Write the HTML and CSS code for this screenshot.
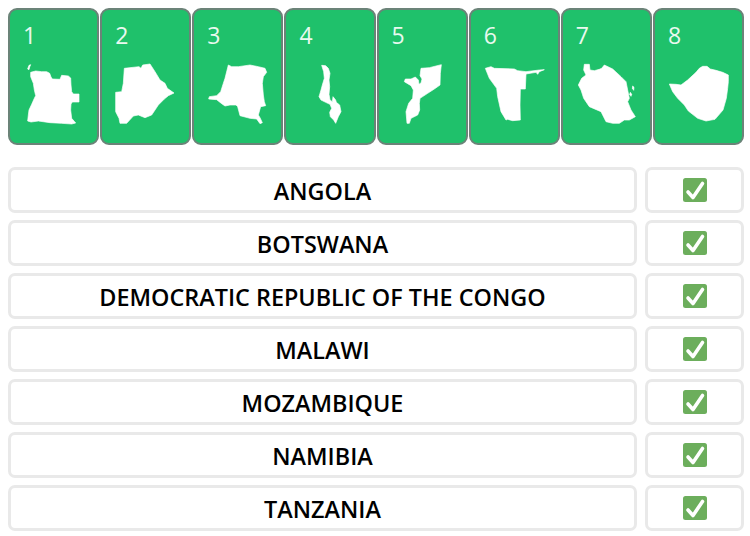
FILE: index.html
```html
<!doctype html>
<html lang="en">
<head>
  <meta charset="utf-8">
  <title>Countries quiz</title>
  <link rel="stylesheet" href="styles.css">
</head>

<body>

<div id="maps">
  <div class="map">
    <div class="num">1</div>
    <svg viewBox="-15 0 261 225"><path d="M38 42 L42 31 L47 29 L44 36 L42 44 Z"/><path d="M47 52 L62 48 L80 50 L95 50 L104 55 L108 66 L112 72 L135 73 L140 61 L160 63 L167 69 L168 90 L170 110 L175 117 L192 117 L192 141 L172 141 L168 147 L167 165 L170 190 L182 204 L170 207 L140 205 L105 203 L70 198 L48 201 L38 198 L40 180 L42 165 L50 148 L58 130 L62 122 L58 105 L55 85 L47 65 Z"/></svg>
  </div>
  <div class="map">
    <div class="num">2</div>
    <svg viewBox="-9 0 261 225"><path d="M58 40 L102 35 L108 40 L113 30 L135 27 L150 50 L165 75 L180 85 L187 100 L207 114 L190 122 L178 132 L160 150 L150 165 L140 180 L120 188 L100 180 L85 183 L65 205 L45 205 L42 190 L32 170 L32 112 L50 110 L55 85 Z"/></svg>
  </div>
  <div class="map">
    <div class="num">3</div>
    <svg viewBox="-18 0 261 225"><path d="M85 30 L95 35 L115 35 L150 30 L175 35 L195 40 L200 52 L190 65 L187 85 L190 120 L193 140 L197 152 L182 155 L175 180 L180 188 L187 203 L180 206 L170 192 L150 190 L120 182 L113 155 L108 150 L90 150 L75 153 L65 146 L50 134 L26 132 L28 125 L50 122 L62 110 L70 85 L75 70 Z"/></svg>
  </div>
  <div class="map">
    <div class="num">4</div>
    <svg viewBox="-27 0 261 225"><path d="M80 31 L92 32 L100 40 L105 55 L102 75 L104 95 L102 118 L105 135 L112 140 L114 125 L122 135 L124 142 L134 150 L138 170 L130 185 L122 205 L116 195 L106 185 L104 172 L110 160 L105 148 L92 142 L78 135 L72 125 L78 105 L82 90 L88 70 L86 50 Z"/></svg>
  </div>
  <div class="map">
    <div class="num">5</div>
    <svg viewBox="249 0 261 225"><path d="M375 40 L400 38 L420 33 L436 29 L433 55 L432 90 L415 102 L395 115 L372 130 L370 145 L371 165 L365 180 L345 190 L340 205 L333 205 L330 170 L338 145 L350 130 L352 105 L345 92 L325 80 L328 72 L345 72 L358 66 L367 75 L369 88 L375 84 L378 72 L372 62 Z"/></svg>
  </div>
  <div class="map">
    <div class="num">6</div>
    <svg viewBox="-15 0 261 225"><path d="M28 40 L45 35 L55 40 L115 42 L125 47 L150 50 L190 45 L205 44 L190 50 L185 58 L180 52 L150 57 L148 102 L133 102 L132 150 L133 195 L110 197 L95 193 L90 195 L75 170 L65 125 L62 100 L40 70 Z"/></svg>
  </div>
  <div class="map">
    <div class="num">7</div>
    <svg viewBox="-24 0 261 225"><path d="M40 28 L55 28 L57 45 L70 47 L85 43 L92 40 L100 30 L125 42 L150 65 L165 80 L170 105 L175 130 L170 140 L180 165 L193 185 L175 195 L160 195 L145 205 L125 205 L105 200 L90 170 L55 155 L38 130 L30 105 L22 90 L32 70 L45 60 L38 45 Z"/><path d="M185 93 L189 97 L188 106 L184 100 Z"/><path d="M178 112 L182 118 L180 124 L176 118 Z"/></svg>
  </div>
  <div class="map">
    <div class="num">8</div>
    <svg viewBox="252 0 261 225"><path d="M295 87 L315 88 L330 90 L350 75 L375 52 L385 40 L395 34 L408 34 L418 42 L435 46 L455 52 L472 60 L472 80 L470 100 L466 130 L456 165 L432 193 L405 198 L380 190 L352 168 L340 150 L320 130 L305 110 Z"/></svg>
  </div>
</div>

<div id="answers">
  <div class="name">ANGOLA</div>
  <div class="mark"><svg class="tick" viewBox="0 0 24 24"><rect width="24" height="24" rx="2.5"/><path d="M5 14 L10 19.5 L19.5 5.5"/></svg></div>
  <div class="name">BOTSWANA</div>
  <div class="mark"><svg class="tick" viewBox="0 0 24 24"><rect width="24" height="24" rx="2.5"/><path d="M5 14 L10 19.5 L19.5 5.5"/></svg></div>
  <div class="name">DEMOCRATIC REPUBLIC OF THE CONGO</div>
  <div class="mark"><svg class="tick" viewBox="0 0 24 24"><rect width="24" height="24" rx="2.5"/><path d="M5 14 L10 19.5 L19.5 5.5"/></svg></div>
  <div class="name">MALAWI</div>
  <div class="mark"><svg class="tick" viewBox="0 0 24 24"><rect width="24" height="24" rx="2.5"/><path d="M5 14 L10 19.5 L19.5 5.5"/></svg></div>
  <div class="name">MOZAMBIQUE</div>
  <div class="mark"><svg class="tick" viewBox="0 0 24 24"><rect width="24" height="24" rx="2.5"/><path d="M5 14 L10 19.5 L19.5 5.5"/></svg></div>
  <div class="name">NAMIBIA</div>
  <div class="mark"><svg class="tick" viewBox="0 0 24 24"><rect width="24" height="24" rx="2.5"/><path d="M5 14 L10 19.5 L19.5 5.5"/></svg></div>
  <div class="name">TANZANIA</div>
  <div class="mark"><svg class="tick" viewBox="0 0 24 24"><rect width="24" height="24" rx="2.5"/><path d="M5 14 L10 19.5 L19.5 5.5"/></svg></div>
</div>

</body>
</html>
```

FILE: styles.css
```css
html {
  box-sizing: border-box;
}
*, *:before, *:after {
  box-sizing: inherit;
}

body {
  margin: 0;
  padding: 8px 6px 0 8px;
  background-color: white;
  font-family: 'Open Sans', sans-serif;
}

#maps {
  display: flex;
  gap: 1px;
}

.map {
  flex: 1 1 0;
  min-width: 0;
  height: 137px;
  background-color: #1fc16b;
  border: 2px solid #6b8378;
  border-radius: 9px;
}

.map .num {
  height: 45px;
  padding: 10px 0 0 13px;
  font-size: 23px;
  line-height: 30px;
  color: #e9f9ef;
}

.map svg {
  display: block;
  width: 87px;
  height: 75px;
}

.map svg path {
  fill: white;
  stroke: white;
  stroke-width: 2;
  stroke-linejoin: round;
}

#answers {
  display: grid;
  grid-template-columns: 1fr 99px;
  column-gap: 8px;
  row-gap: 7px;
  margin-top: 22px;
}

.name, .mark {
  display: flex;
  align-items: center;
  justify-content: center;
  height: 46px;
  border: 3px solid #e9e9e9;
  border-radius: 7px;
}

.name {
  padding-top: 1px;
  font-size: 23.4px;
  font-weight: 600;
  color: #000;
}

.tick {
  display: block;
  width: 24px;
  height: 24px;
}

.tick rect {
  fill: #6cae5c;
}

.tick path {
  fill: none;
  stroke: white;
  stroke-width: 3.6;
  stroke-linecap: round;
  stroke-linejoin: round;
}
```
